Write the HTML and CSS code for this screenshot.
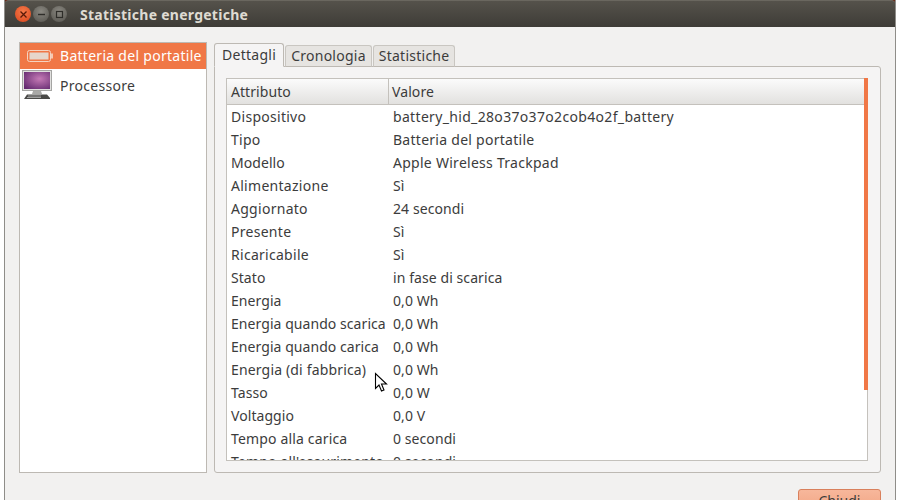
FILE: index.html
```html
<!DOCTYPE html>
<html lang="it">
<head>
<meta charset="utf-8">
<title>Statistiche energetiche</title>
<link rel="stylesheet" href="styles.css">
</head>
<body>
<div class="window">
  <header class="titlebar">
    <div class="controls">
      <span class="ctl close"><svg width="9" height="9" viewBox="0 0 9 9"><path d="M1.500 1.500l6 6M7.500 1.500l-6 6" stroke="#5a1a08" stroke-width="1.300" fill="none"/></svg></span>
      <span class="ctl"><svg width="9" height="9" viewBox="0 0 9 9"><path d="M1 4.500h7" stroke="#2e2d29" stroke-width="1.400" fill="none"/></svg></span>
      <span class="ctl"><svg width="9" height="9" viewBox="0 0 9 9"><rect x="1.500" y="1.500" width="6" height="6" stroke="#2e2d29" stroke-width="1.200" fill="none"/></svg></span>
    </div>
    <span class="title">Statistiche energetiche</span>
  </header>
  <main class="content">
    <div class="main-row">
      <aside class="sidebar">
        <div class="dev selected">
          <svg class="dev-icon" width="32" height="24" viewBox="0 0 32 24"><rect x="6.500" y="6.500" width="23" height="11" rx="2" fill="none" stroke="#f5d3c0" stroke-width="1"/><rect x="8.500" y="8.500" width="19" height="7" fill="#e6d6cb"/><rect x="30" y="9.500" width="2" height="5" fill="#f5c9b2"/></svg>
          <span class="dev-label">Batteria del portatile</span>
        </div>
        <div class="dev">
          <svg class="dev-icon mon" width="32" height="32" viewBox="0 0 32 32"><defs><radialGradient id="g" cx=".6" cy=".4" r=".75"><stop offset="0" stop-color="#c57ab6"/><stop offset="1" stop-color="#642a70"/></radialGradient></defs><rect x="1.500" y="1.500" width="29" height="20" fill="#e0e0de" stroke="#a5a5a3"/><rect x="3" y="3" width="26" height="17" fill="url(#g)"/><path d="M12 22h8l1 3H11z" fill="#a9a9a7"/><path d="M3 30l3-4.500h20l3 3.500v1z" fill="#4a4a48"/><path d="M7 27h13M6 28.500h14" stroke="#a0a0a0"/></svg>
          <span class="dev-label">Processore</span>
        </div>
      </aside>
      <section class="notebook">
        <nav class="tabs">
          <span class="tab active">Dettagli</span>
          <span class="tab">Cronologia</span>
          <span class="tab">Statistiche</span>
        </nav>
        <div class="panel">
          <div class="table">
            <div class="thead">
              <span class="th c1">Attributo</span>
              <span class="th c2">Valore</span>
            </div>
            <div class="tbody">
              <div class="row"><span class="c1 wide">Dispositivo</span><span class="c2 wider">battery_hid_28o37o37o2cob4o2f_battery</span></div>
              <div class="row"><span class="c1 wide">Tipo</span><span class="c2 wide">Batteria del portatile</span></div>
              <div class="row"><span class="c1">Modello</span><span class="c2 wide">Apple Wireless Trackpad</span></div>
              <div class="row"><span class="c1 wide">Alimentazione</span><span class="c2">Sì</span></div>
              <div class="row"><span class="c1 wide">Aggiornato</span><span class="c2">24 secondi</span></div>
              <div class="row"><span class="c1 wide">Presente</span><span class="c2">Sì</span></div>
              <div class="row"><span class="c1 wide">Ricaricabile</span><span class="c2">Sì</span></div>
              <div class="row"><span class="c1">Stato</span><span class="c2">in fase di scarica</span></div>
              <div class="row"><span class="c1">Energia</span><span class="c2">0,0 Wh</span></div>
              <div class="row"><span class="c1">Energia quando scarica</span><span class="c2">0,0 Wh</span></div>
              <div class="row"><span class="c1">Energia quando carica</span><span class="c2">0,0 Wh</span></div>
              <div class="row"><span class="c1 mid">Energia (di fabbrica)</span><span class="c2">0,0 Wh</span></div>
              <div class="row"><span class="c1">Tasso</span><span class="c2">0,0 W</span></div>
              <div class="row"><span class="c1">Voltaggio</span><span class="c2">0,0 V</span></div>
              <div class="row"><span class="c1 mid">Tempo alla carica</span><span class="c2">0 secondi</span></div>
              <div class="row"><span class="c1 mid">Tempo all'esaurimento</span><span class="c2">0 secondi</span></div>
            </div>
          </div>
          <div class="scrollbar"></div>
        </div>
      </section>
    </div>
    <div class="actions"><button class="close-btn">Chiudi</button></div>
  </main>
</div>
<svg class="cursor" width="14" height="21" viewBox="0 0 14 21"><path d="M1.500 1.500v15l3.500-3.500 2.500 6 2.500-1-2.500-6h5z" fill="#fff" stroke="#000" stroke-width="1.100"/></svg>
</body>
</html>
```

FILE: styles.css
```css
* { box-sizing: border-box; }
html, body { margin: 0; height: 500px; overflow: hidden; }
body {
  width: 900px;
  background: #fff;
  font-family: "Noto Sans", sans-serif;
  font-size: 14px;
  color: #3c3c3c;
  position: relative;
}
.window {
  margin-left: 4px;
  width: 892px;
  height: 500px;
  background: linear-gradient(#6b2a18 6px, #f2f1f0 6px);
  border-left: 1px solid #8f8d89;
  border-right: 1px solid #8f8d89;
  display: flex;
  flex-direction: column;
  overflow: hidden;
}
.titlebar {
  flex: none;
  height: 27px;
  margin: 0 -1px;
  background: linear-gradient(#55524b, #3e3c37);
  border-top: 1px solid #6a675f;
  border-radius: 5px 5px 0 0;
  display: flex;
  align-items: center;
  padding-left: 11px;
}
.controls { display: flex; gap: 2px; width: 65px; flex: none; }
.ctl {
  width: 16px;
  height: 16px;
  border-radius: 50%;
  background: radial-gradient(circle at 50% 35%, #8a8881, #55534d);
  display: flex;
  align-items: center;
  justify-content: center;
}
.ctl.close { background: radial-gradient(circle at 50% 35%, #f57a4a, #d9451c); }
.title { color: #dfdbd2; font-weight: 700; font-size: 14px; letter-spacing: .26px; }
.content {
  flex: 1;
  min-height: 0;
  padding: 15px 14px 0 14px;
  display: flex;
  flex-direction: column;
}
.main-row { display: flex; gap: 7px; height: 431px; flex: none; }
.sidebar {
  width: 188px;
  flex: none;
  background: #fff;
  border: 1px solid #bdb9b3;
}
.dev {
  display: flex;
  align-items: center;
  height: 32px;
  color: #3c3c3c;
}
.dev.selected { height: 26px; background: #f07746; color: #fff; }
.dev-icon { flex: none; margin: 0 7px 0 1px; width: 32px; }
.dev-label { white-space: nowrap; letter-spacing: .28px; }
.dev.selected .dev-label { padding-bottom: 2px; }
.mon { height: 32px; }
.notebook { flex: 1; min-width: 0; display: flex; flex-direction: column; }
.tabs { display: flex; align-items: flex-end; height: 25px; flex: none; gap: 1px; position: relative; z-index: 1; }
.tab {
  height: 22px;
  padding: 0 5px;
  line-height: 20px;
  background: #e6e4e1;
  border: 1px solid #c9c6c1;
  border-bottom: 1px solid #bdb9b3;
  border-radius: 3px 3px 0 0;
  white-space: nowrap;
  letter-spacing: .25px;
}
.tab.active {
  height: 24px;
  line-height: 22px;
  padding: 0 7px;
  letter-spacing: .28px;
  background: #f5f4f4;
  border-color: #bdb9b3;
  border-bottom-color: #f5f4f4;
}
.panel {
  flex: 1;
  min-height: 0;
  margin-top: -1px;
  background: #f5f4f4;
  border: 1px solid #bdb9b3;
  border-radius: 0 3px 3px 3px;
  padding: 11px 12px 11px 11px;
  display: flex;
  position: relative;
}
.table {
  flex: 1;
  min-width: 0;
  background: #fff;
  border: 1px solid #c4c1bc;
  overflow: hidden;
}
.thead {
  display: flex;
  height: 26px;
  background: linear-gradient(#fbfbfb, #e2e1df);
  border-bottom: 1px solid #c4c1bc;
}
.th { line-height: 25px; letter-spacing: .55px; }
.thead .c1 { border-right: 1px solid #c4c1bc; }
.thead .c2 { padding-left: 3px; }
.c1 { width: 162px; flex: none; padding-left: 4px; white-space: nowrap; letter-spacing: .06px; }
.c2 { flex: 1; padding-left: 4px; white-space: nowrap; letter-spacing: .08px; }
.tbody { padding-top: 1px; }
.row { display: flex; height: 23px; line-height: 22px; }
.row .c1.wide { letter-spacing: .28px; }
.row .c1.mid { letter-spacing: .16px; }
.row .c2.wide { letter-spacing: .27px; }
.row .c2.wider { letter-spacing: .33px; }
.scrollbar {
  position: absolute;
  top: 11px;
  right: 12px;
  width: 4px;
  height: 312px;
  background: #f07746;
}
.actions { display: flex; justify-content: flex-end; padding-top: 16px; }
.close-btn {
  width: 83px;
  height: 30px;
  border: 1px solid #d9805c;
  border-radius: 3px;
  background: linear-gradient(#f7b79b, #f09f7c);
  color: #3c3c3c;
  font: inherit;
  padding: 0 0 8px;
}
.cursor { position: absolute; left: 374px; top: 372px; }
```
